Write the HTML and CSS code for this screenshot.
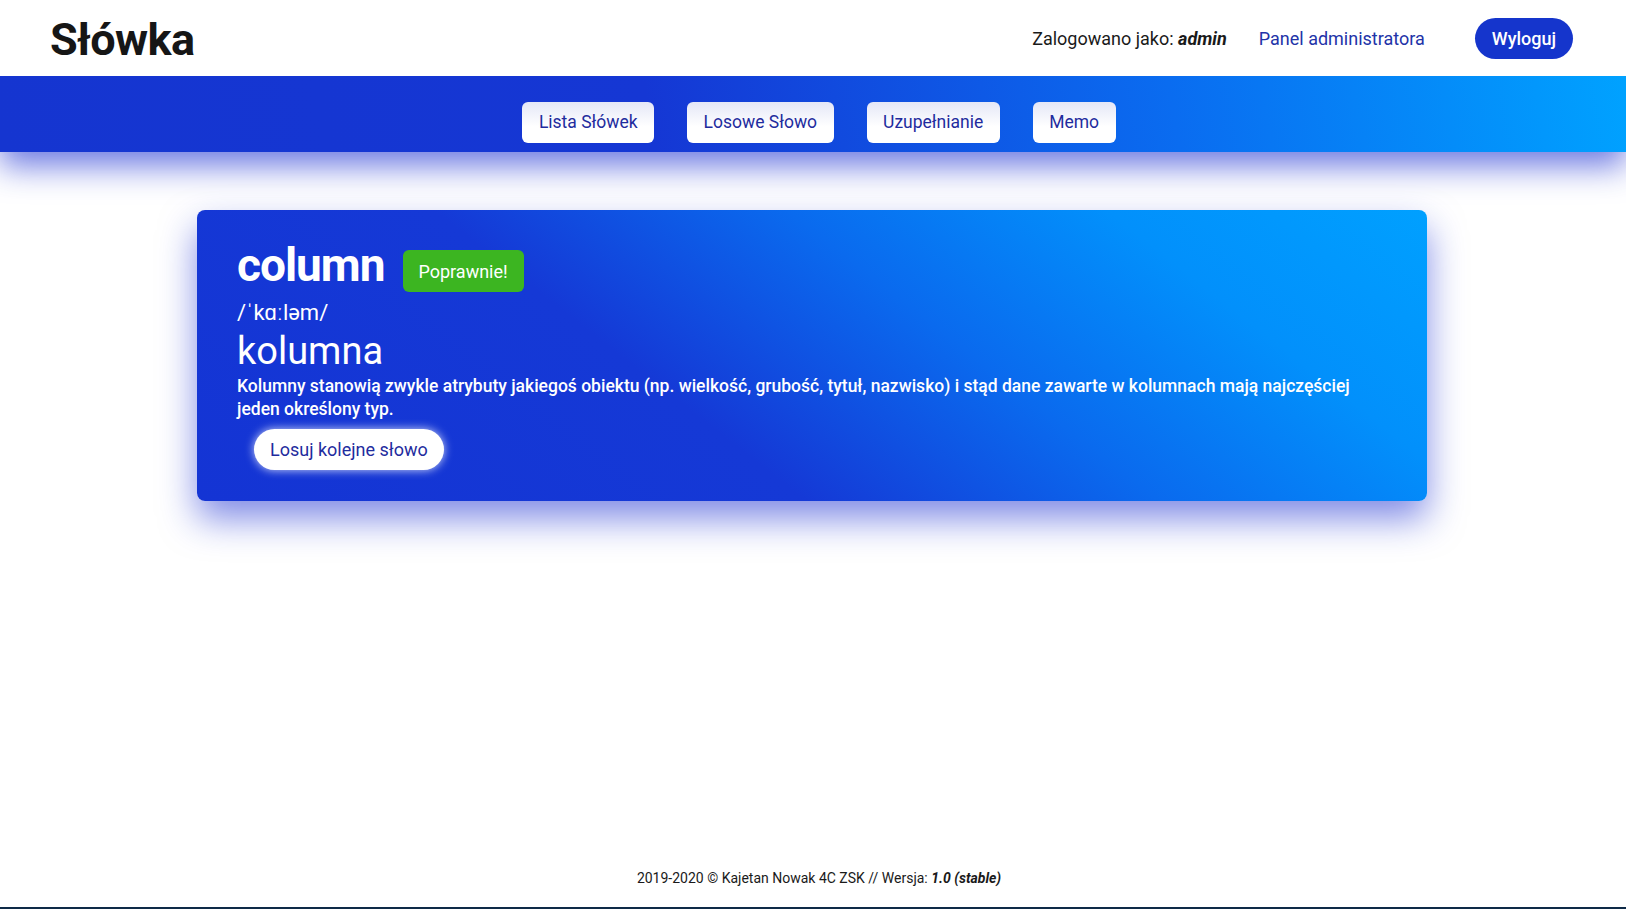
FILE: index.html
```html
<!DOCTYPE html>
<html lang="pl">
<head>
<meta charset="utf-8">
<title>Słówka</title>
<link rel="stylesheet" href="styles.css">
</head>
<body>
<header class="topbar">
  <div class="brand">Słówka</div>
  <div class="user-area">
    <span class="logged">Zalogowano jako: <b><i>admin</i></b></span>
    <a class="admin-link" href="#">Panel administratora</a>
    <a class="logout" href="#">Wyloguj</a>
  </div>
</header>
<nav class="navbar">
  <a class="nav-btn" href="#">Lista Słówek</a>
  <a class="nav-btn" href="#">Losowe Słowo</a>
  <a class="nav-btn" href="#">Uzupełnianie</a>
  <a class="nav-btn" href="#">Memo</a>
</nav>
<main class="content">
  <section class="card">
    <div class="word-row">
      <h1 class="word">column</h1>
      <span class="badge">Poprawnie!</span>
    </div>
    <div class="phonetic">/ˈkɑːləm/</div>
    <div class="translation">kolumna</div>
    <p class="desc">Kolumny stanowią zwykle atrybuty jakiegoś obiektu (np. wielkość, grubość, tytuł, nazwisko) i stąd dane zawarte w kolumnach mają najczęściej jeden określony typ.</p>
    <a class="next-btn" href="#">Losuj kolejne słowo</a>
  </section>
</main>
<footer class="footer">2019-2020 © Kajetan Nowak 4C ZSK // Wersja: <b><i>1.0 (stable)</i></b></footer>
</body>
</html>
```
FILE: styles.css
```css
* { box-sizing: border-box; }
html, body { height: 100%; }
body {
  margin: 0;
  font-family: Roboto, "Liberation Sans", sans-serif;
  color: #1a1a1a;
  background: #fff;
  display: flex;
  flex-direction: column;
  min-height: 100vh;
  border-bottom: 2px solid #0e2a47;
}
a { text-decoration: none; }

.topbar {
  height: 76px;
  display: flex;
  align-items: center;
  justify-content: space-between;
  padding: 0 53px 0 50px;
  background: #fff;
  position: relative;
  z-index: 3;
}
.brand {
  font-size: 45px;
  font-weight: 700;
  letter-spacing: -0.6px;
  color: #161616;
  line-height: 1;
  margin-top: 2px;
}
.user-area {
  display: flex;
  align-items: center;
  font-size: 18px;
}
.logged { color: #1a1a1a; }
.admin-link { color: #2233a8; margin-left: 32px; }
.logout {
  margin-left: 50px;
  background: #1535cc;
  color: #fff;
  height: 41px;
  padding: 0 17px;
  border-radius: 21px;
  display: flex;
  align-items: center;
  font-weight: 500;
}

.navbar {
  height: 76px;
  display: flex;
  justify-content: center;
  align-items: center;
  gap: 33px;
  padding: 16px 0 0 12px;
  background: linear-gradient(80deg, #1535d0 0%, #1537d4 40%, #0a6cf0 72%, #00a2ff 100%);
  box-shadow: 0 14px 32px rgba(30, 50, 210, 0.65);
  position: relative;
  z-index: 2;
}
.nav-btn {
  height: 41px;
  padding: 0 16.5px;
  display: flex;
  align-items: center;
  background: linear-gradient(to bottom, #e4e7f7, #ffffff 60%);
  border-radius: 6px;
  color: #1f2c9e;
  font-size: 17.5px;
}

.content {
  flex: 1;
  padding: 58px 0 0 197px;
}
.card {
  width: 1230px;
  height: 291px;
  border-radius: 8px;
  padding: 25px 40px;
  color: #fff;
  background: linear-gradient(38deg, #1434d4 0%, #1539d6 38%, #0a6aee 60%, #0290fb 80%, #00a0ff 100%);
  box-shadow: 0 18px 36px rgba(25, 45, 210, 0.55);
}
.word-row {
  display: flex;
  align-items: center;
}
.word {
  margin: 0;
  font-size: 46px;
  font-weight: 700;
  letter-spacing: -1px;
  line-height: 56px;
}
.badge {
  margin-left: 18px;
  margin-top: 15px;
  margin-bottom: 3px;
  background: #3cb521;
  color: #fff;
  height: 42px;
  padding: 0 16px;
  border-radius: 6px;
  display: flex;
  align-items: center;
  font-size: 18px;
}
.phonetic {
  font-size: 22px;
  line-height: 28px;
  margin-top: 4px;
}
.translation {
  font-size: 38px;
  line-height: 44px;
  margin-top: 2px;
}
.desc {
  margin: 0;
  font-size: 17.5px;
  line-height: 23px;
  font-weight: 500;
  margin-top: 2px;
}
.next-btn {
  display: inline-flex;
  align-items: center;
  margin: 8px 0 0 17px;
  height: 41px;
  padding: 0 16px;
  border-radius: 21px;
  background: #fff;
  color: #1f2c9e;
  font-size: 18px;
  box-shadow: 0 0 10px rgba(255, 255, 255, 0.8);
}

.footer {
  text-align: center;
  font-size: 14px;
  color: #1a1a1a;
  padding: 0 0 21px 12px;
}
```
